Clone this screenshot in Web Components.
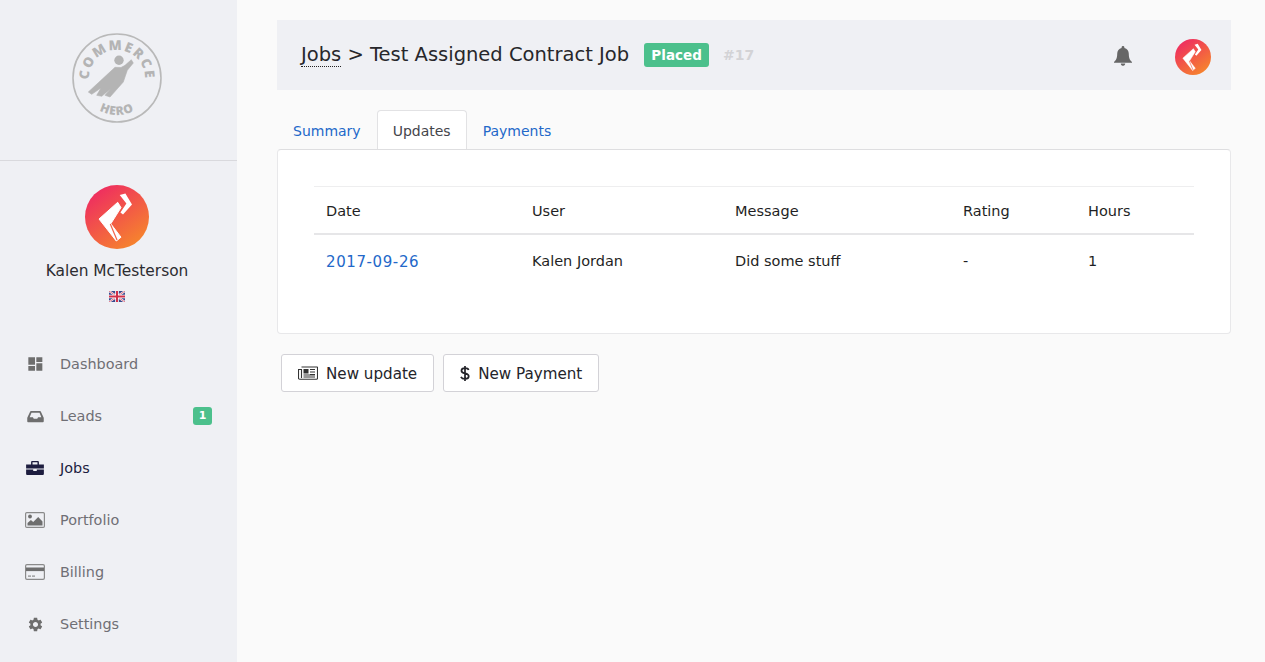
<!DOCTYPE html>
<html>
<head>
<meta charset="utf-8">
<title>Jobs</title>
<style>
  html, body { margin: 0; height: 100%; }
  body {
    font-family: "DejaVu Sans", "Liberation Sans", sans-serif;
    color: #24242a;
    background: #fafafa;
    overflow: hidden;
  }
  svg { display: block; }
</style>
</head>
<body>
<app-shell>
  <app-sidebar slot="sidebar">
    <nav-item label="Dashboard"><svg width="16" height="16" viewBox="0 0 24 24" fill="#6e6e6e"><path d="M2 13h10V2H2v11zm0 9h10v-7H2v7zm12 0h9V11h-9v11zm0-20v7h9V2h-9z"/></svg></nav-item>
    <nav-item label="Leads" badge="1"><svg width="17" height="15" viewBox="0 0 20 18" fill="#6e6e6e"><path d="M4.600 2.500h10.800c.5 0 .9.300 1.100.7L19.600 10c.2.300.3.600.3 1v3.600c0 .8-.7 1.400-1.400 1.400h-17c-.8 0-1.400-.6-1.400-1.400V11c0-.4.100-.7.300-1l3.100-6.800c.2-.4.600-.7 1.100-.7zm.6 2L3 9.800h3.900l1 2h4.200l1-2H17l-2.200-5.300H5.200z" fill-rule="evenodd"/></svg></nav-item>
    <nav-item label="Jobs" active><svg width="18" height="16" viewBox="0 0 20 18" fill="#1d1d3f"><path d="M7 1h6c.8 0 1.400.6 1.400 1.400V5H20v4.500H0V5h5.600V2.400C5.600 1.600 6.200 1 7 1zm.2 1.500V5h5.600V2.500H7.200zM0 10.700h8v1.800h4v-1.800h8v4.700c0 .8-.6 1.400-1.400 1.400H1.400c-.8 0-1.400-.6-1.400-1.400v-4.700z"/></svg></nav-item>
    <nav-item label="Portfolio"><svg width="20" height="18" viewBox="0 0 20 18"><rect x=".6" y="1.600" width="18.800" height="14.800" rx="1.200" fill="none" stroke="#8a8a8a" stroke-width="1.200"/><circle cx="5" cy="5.500" r="1.900" fill="#6e6e6e"/><path d="M2.500 14.500v-2.400l3.400-3.200 2.300 2.200 5-5.100 4.300 4.500v4z" fill="#6e6e6e"/></svg></nav-item>
    <nav-item label="Billing"><svg width="20" height="18" viewBox="0 0 20 18"><rect x=".6" y="1.600" width="18.800" height="14.800" rx="1.400" fill="none" stroke="#8a8a8a" stroke-width="1.200"/><rect x="1" y="4.500" width="18" height="3.600" fill="#6e6e6e"/><rect x="3" y="12.500" width="3" height="1.200" fill="#8a8a8a"/><rect x="7" y="12.500" width="3" height="1.200" fill="#8a8a8a"/></svg></nav-item>
    <nav-item label="Settings"><svg width="17" height="17" viewBox="0 0 24 24" fill="#6e6e6e"><path d="M19.140 12.940c.04-.3.06-.61.06-.94 0-.32-.02-.64-.07-.94l2.030-1.580c.18-.14.23-.41.12-.61l-1.920-3.320c-.12-.22-.37-.29-.59-.22l-2.390.96c-.5-.38-1.030-.7-1.620-.94l-.36-2.540c-.04-.24-.24-.41-.48-.41h-3.840c-.24 0-.43.17-.47.41l-.36 2.540c-.59.24-1.130.57-1.620.94l-2.390-.96c-.22-.08-.47 0-.59.22L2.740 8.870c-.12.21-.08.47.12.61l2.030 1.580c-.05.3-.09.63-.09.94s.02.64.07.94l-2.030 1.580c-.18.14-.23.41-.12.61l1.920 3.320c.12.22.37.29.59.22l2.390-.96c.5.38 1.030.7 1.620.94l.36 2.540c.05.24.24.41.48.41h3.840c.24 0 .44-.17.47-.41l.36-2.540c.59-.24 1.130-.56 1.620-.94l2.390.96c.22.08.47 0 .59-.22l1.920-3.320c.12-.22.07-.47-.12-.61l-2.010-1.580zM12 15.600c-1.980 0-3.600-1.620-3.600-3.600s1.620-3.600 3.600-3.600 3.600 1.620 3.600 3.600-1.620 3.600-3.600 3.600z"/></svg></nav-item>
  </app-sidebar>
  <page-header></page-header>
  <tab-bar></tab-bar>
  <updates-panel></updates-panel>
  <div style="display:flex;gap:9px;margin:20px 0 0 4px">
    <action-button label="New update"><svg width="20" height="14" viewBox="0 0 20 14" fill="none" stroke="#333" stroke-width="1.100"><path d="M3.500 1h15.800c.2 0 .2.100.2.300v11c0 .6-.4 1-1 1H1.700c-.6 0-1.200-.5-1.200-1.200V3.500h3v8.500"/><rect x="5.500" y="3" width="5" height="4.500" fill="#333" stroke="none"/><path d="M12 3.500h5M12 6h5M12 8.500h5M5.500 9h11.500M5.500 11h11.500"/></svg></action-button>
    <action-button label="New Payment"><svg width="10" height="17" viewBox="0 0 11 18" fill="none" stroke="#24242a" stroke-width="1.900"><path d="M9.500 5.200C9 3.900 7.600 3.200 5.500 3.200 3.200 3.200 1.600 4.300 1.600 6 1.600 10 9.600 7.900 9.600 12c0 1.800-1.700 2.900-4.100 2.900-2.200 0-3.800-.9-4.500-2.300M5.500 .8v16.400"/></svg></action-button>
  </div>
</app-shell>

<script>
const BRAND_MARK = (size, id) => `
  <svg width="${size}" height="${size}" viewBox="0 0 64 64" style="display:block">
    <defs><linearGradient id="${id}" x1="0.15" y1="0.05" x2="0.8" y2="0.95">
      <stop offset="0" stop-color="#ee2a62"/><stop offset="1" stop-color="#f6852c"/>
    </linearGradient></defs>
    <circle cx="32" cy="32" r="32" fill="url(#${id})"/>
    <path fill="#fff" stroke="#fff" stroke-width="1" stroke-linejoin="round" d="M14 34 32.700 17.300 36 22.600 25.800 38.800 36 52.200 31.300 56z"/>
    <path fill="#fff" d="M34.700 10 40.400 8.400 47 19.500 38 29.600 35.400 27.600 41.400 18.500z"/>
    <path fill="none" stroke="#f2644a" stroke-width="1.200" d="M25.300 39 32 55"/>
  </svg>`;

class AppShell extends HTMLElement {
  constructor() {
    super();
    this.attachShadow({ mode: "open" });
    this.shadowRoot.innerHTML = `
      <style>
        :host { display: flex; height: 662px; }
        main { flex: 1; min-width: 0; padding: 20px 34px 0 40px; }
      </style>
      <slot name="sidebar"></slot>
      <main><slot></slot></main>`;
  }
}

class AppSidebar extends HTMLElement {
  constructor() {
    super();
    this.attachShadow({ mode: "open" });
    this.shadowRoot.innerHTML = `
      <style>
        :host { display: block; width: 237px; flex: none; background: #eff0f4; }
        .logo {
          height: 161px;
          box-sizing: border-box;
          border-bottom: 1px solid #d9d9dd;
          display: flex;
          justify-content: center;
          padding: 33px 3px 0 0;
        }
        .logo text { font-family: "Open Sans", sans-serif; font-weight: 800; fill: #b4b4b4; }
        .profile {
          display: flex;
          flex-direction: column;
          align-items: center;
          padding: 24px 3px 0 0;
          height: 177px;
          box-sizing: border-box;
        }
        .name { margin-top: 12px; font-size: 15.400px; line-height: 20px; color: #2c2c30; }
        .flag { margin-top: 10px; }
      </style>
      <div class="logo">
        <svg width="90" height="90" viewBox="0 0 90 90">
          <defs>
            <path id="arc-top" d="M45 73a28 28 0 1 1 0-56 28 28 0 1 1 0 56"/>
            <path id="arc-bottom" d="M8 45a37 37 0 0 0 74 0"/>
          </defs>
          <circle cx="45" cy="45" r="44" fill="none" stroke="#b9b9b9" stroke-width="1.600"/>
          <text font-size="13.500" letter-spacing="1.600" text-anchor="middle"><textPath href="#arc-top" startOffset="50%">COMMERCE</textPath></text>
          <text font-size="12" letter-spacing=".8" text-anchor="middle"><textPath href="#arc-bottom" startOffset="50%">HERO</textPath></text>
          <circle cx="47" cy="27.300" r="4.700" fill="#b4b4b4"/>
          <path fill="#b4b4b4" stroke="#b4b4b4" stroke-width=".6" stroke-linejoin="round" d="M43 34.300 16.300 59 19.700 61.300 29 55 24.700 62.300 29.700 63.300 38.500 56 33 62.300 38 64 51.300 49 55.300 37.300 61.300 30 59.300 26.700 53 32.300 49 34.500z"/>
        </svg>
      </div>
      <div class="profile">
        ${BRAND_MARK(64, "grad-side")}
        <div class="name">Kalen McTesterson</div>
        <svg class="flag" width="16" height="11" viewBox="0 0 16 11">
          <rect width="16" height="11" fill="#3a4a8c"/>
          <path d="M0 0 16 11M16 0 0 11" stroke="#fff" stroke-width="2"/>
          <path d="M0 0 16 11M16 0 0 11" stroke="#d0304a" stroke-width=".7"/>
          <path d="M8 0V11M0 5.500H16" stroke="#fff" stroke-width="3.600"/>
          <path d="M8 0V11M0 5.500H16" stroke="#d0304a" stroke-width="2"/>
        </svg>
      </div>
      <slot></slot>`;
  }
}

class NavItem extends HTMLElement {
  constructor() {
    super();
    this.attachShadow({ mode: "open" });
  }

  connectedCallback() {
    const active = this.hasAttribute("active");
    const badge = this.getAttribute("badge");
    this.shadowRoot.innerHTML = `
      <style>
        :host {
          display: flex;
          align-items: center;
          height: 52px;
          padding: 0 25px;
          font-size: 14.400px;
          color: ${active ? "#1d1d3f" : "#6f6f75"};
        }
        .icon { width: 20px; display: flex; justify-content: center; margin-right: 15px; }
        .badge {
          margin-left: auto;
          background: #4cc08c;
          color: #fff;
          font-size: 11px;
          font-weight: 700;
          width: 19px;
          height: 18px;
          line-height: 18px;
          text-align: center;
          border-radius: 3px;
        }
      </style>
      <span class="icon"><slot></slot></span>
      <span>${this.getAttribute("label")}</span>
      ${badge ? `<span class="badge">${badge}</span>` : ""}`;
  }
}

class PageHeader extends HTMLElement {
  constructor() {
    super();
    this.attachShadow({ mode: "open" });
    this.shadowRoot.innerHTML = `
      <style>
        :host {
          display: flex;
          align-items: center;
          height: 70px;
          padding: 0 20px 0 24px;
          background: #eff0f4;
          color: #27272b;
        }
        h1 { margin: 0 0 2px; font-size: 19.500px; font-weight: 400; white-space: nowrap; }
        .crumb { border-bottom: 1px dotted #222; }
        .status {
          margin-left: 15px;
          background: #4cc08c;
          color: #fff;
          font-size: 13.500px;
          font-weight: 700;
          width: 65px;
          height: 24px;
          line-height: 24px;
          text-align: center;
          border-radius: 3px;
        }
        .num { margin-left: 14px; color: #d3d3d6; font-size: 14px; font-weight: 700; }
        .bell { margin: 2px 41px 0 auto; }
        .mark { margin-top: 4px; }
      </style>
      <h1><span class="crumb">Jobs</span> &gt; Test Assigned Contract Job</h1>
      <span class="status">Placed</span>
      <span class="num">#17</span>
      <svg class="bell" width="22" height="22" viewBox="0 0 22 22" fill="#666">
        <path d="M11 1c.8 0 1.400.6 1.400 1.400v.5c2.700.6 4.400 2.900 4.400 5.800 0 4.400 1 6.200 3.200 8.300v.8H2v-.8c2.200-2.100 3.200-3.900 3.200-8.300 0-2.900 1.700-5.200 4.400-5.800v-.5C9.600 1.600 10.200 1 11 1zM8.800 18.600h4.400c0 1.300-1 2.300-2.200 2.300s-2.200-1-2.200-2.300z"/>
      </svg>
      <div class="mark">${BRAND_MARK(36, "grad-head")}</div>`;
  }
}

class TabBar extends HTMLElement {
  constructor() {
    super();
    this.attachShadow({ mode: "open" });
    this.shadowRoot.innerHTML = `
      <style>
        :host {
          display: flex;
          margin-top: 20px;
          height: 39px;
          font-size: 14px;
          color: #2368c9;
        }
        a {
          display: block;
          box-sizing: border-box;
          padding: 0 16px;
          height: 39px;
          line-height: 43px;
          white-space: nowrap;
        }
        .on {
          background: #fff;
          color: #45454b;
          border: 1px solid #e2e2e4;
          border-bottom: 0;
          border-radius: 4px 4px 0 0;
          padding: 0 15px;
          line-height: 41px;
        }
      </style>
      <a>Summary</a><a class="on">Updates</a><a>Payments</a>`;
  }
}

class UpdatesPanel extends HTMLElement {
  constructor() {
    super();
    this.attachShadow({ mode: "open" });
    this.shadowRoot.innerHTML = `
      <style>
        :host {
          display: block;
          box-sizing: border-box;
          height: 185px;
          padding: 36px 36px 0;
          background: #fff;
          border: 1px solid #e8e8ea;
          border-top-color: #dedee0;
          border-radius: 4px;
          font-size: 14.500px;
          color: #1f1f24;
        }
        table { width: 100%; border-collapse: collapse; table-layout: fixed; }
        th, td { text-align: left; font-weight: 400; padding: 2px 12px 0; white-space: nowrap; box-sizing: border-box; }
        th { height: 47px; padding-top: 3px; border-top: 1px solid #eeeeef; border-bottom: 2px solid #e6e6e8; }
        td { height: 52px; }
        .date { padding-top: 4px; }
        a { color: #2368c9; font-size: 15px; letter-spacing: .6px; }
      </style>
      <table>
        <colgroup><col style="width:206px"><col style="width:203px"><col style="width:228px"><col style="width:125px"><col></colgroup>
        <thead><tr><th>Date</th><th>User</th><th>Message</th><th>Rating</th><th>Hours</th></tr></thead>
        <tbody><tr><td class="date"><a>2017-09-26</a></td><td>Kalen Jordan</td><td>Did some stuff</td><td>-</td><td>1</td></tr></tbody>
      </table>`;
  }
}

class ActionButton extends HTMLElement {
  constructor() {
    super();
    this.attachShadow({ mode: "open" });
  }

  connectedCallback() {
    this.shadowRoot.innerHTML = `
      <style>
        :host {
          display: inline-flex;
          align-items: center;
          gap: 8px;
          height: 38px;
          box-sizing: border-box;
          padding: 0 16px;
          background: #fff;
          border: 1px solid #d3d2d7;
          border-radius: 3px;
          font-size: 15.150px;
          color: #24242a;
        }
        span { padding-top: 2px; }
      </style>
      <slot></slot><span>${this.getAttribute("label")}</span>`;
  }
}

customElements.define("app-shell", AppShell);
customElements.define("app-sidebar", AppSidebar);
customElements.define("nav-item", NavItem);
customElements.define("page-header", PageHeader);
customElements.define("tab-bar", TabBar);
customElements.define("updates-panel", UpdatesPanel);
customElements.define("action-button", ActionButton);
</script>
</body>
</html>
